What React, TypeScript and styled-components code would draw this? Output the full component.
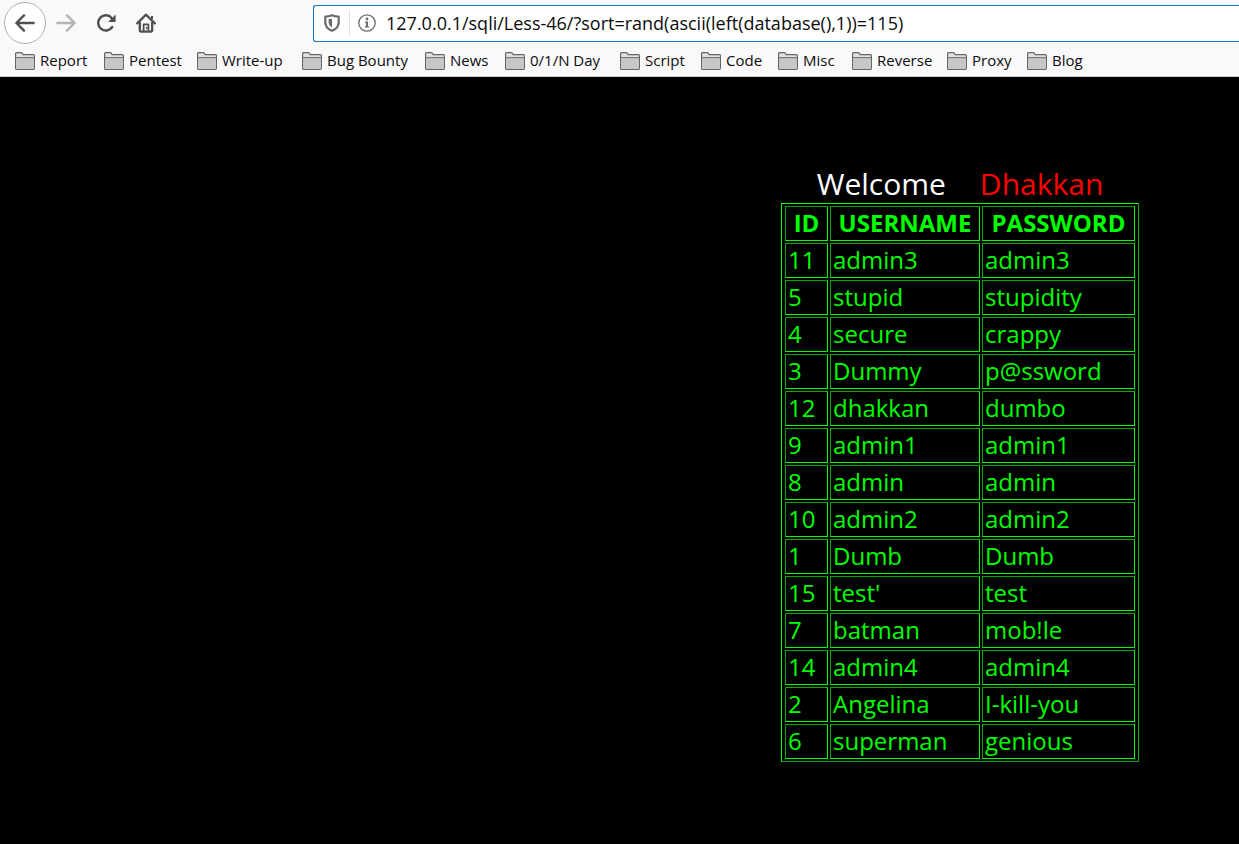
import React from "react";
import styled, { createGlobalStyle, css } from "styled-components";

const GlobalStyle = createGlobalStyle`
  html, body, #root { height: 100%; }
  body {
    margin: 0;
    background: #000;
    font-family: "Open Sans", "Noto Sans", sans-serif;
  }
`;

const Window = styled.div`
  display: flex;
  flex-direction: column;
  min-height: 100%;
  overflow-x: hidden;
`;

const Chrome = styled.header`
  background: #f9f9fa;
  border-bottom: 1px solid #cccccc;
`;

const Toolbar = styled.div`
  display: flex;
  align-items: center;
  height: 46px;
  padding-left: 4px;
`;

const NavButtons = styled.nav`
  display: flex;
  align-items: center;
  width: 309px;
  flex: none;
`;

const NavButton = styled.button<{ $round?: boolean }>`
  display: flex;
  align-items: center;
  justify-content: center;
  box-sizing: border-box;
  width: ${(p) => (p.$round ? 42 : 40)}px;
  height: ${(p) => (p.$round ? 42 : 40)}px;
  padding: 0;
  border: ${(p) => (p.$round ? "1px solid #b1b1b3" : "0")};
  border-radius: ${(p) => (p.$round ? "50%" : "2px")};
  background: ${(p) => (p.$round ? "#fff" : "transparent")};
  color: #4f4f50;

  &:disabled { color: #b4b4b5; }
`;

const AddressBar = styled.div`
  display: flex;
  align-items: center;
  flex: 1;
  box-sizing: border-box;
  height: 37px;
  border: 1px solid #0a74cc;
  border-right: 0;
  border-radius: 3px 0 0 3px;
  background: #fff;
  color: #6a6a6b;
`;

const Shield = styled.span`
  display: flex;
  align-items: center;
  justify-content: center;
  width: 35px;
  height: 26px;
  border-right: 1px solid #e1e1e2;
`;

const Info = styled.span`
  display: flex;
  margin: 0 10px 0 8px;
`;

const Url = styled.input`
  flex: 1;
  min-width: 0;
  padding: 0;
  border: 0;
  outline: 0;
  background: transparent;
  color: #0c0c0d;
  font: 18px/24px "Open Sans", "Noto Sans", sans-serif;
`;

const Bookmarks = styled.nav`
  display: flex;
  height: 30px;
  padding-left: 15px;
`;

const Bookmark = styled.a<{ $width: number }>`
  display: flex;
  align-items: center;
  gap: 5px;
  flex: none;
  width: ${(p) => p.$width}px;
  color: #0c0c0d;
  font-size: 15px;
  line-height: 20px;
  text-decoration: none;
  white-space: nowrap;
`;

const BookmarkLabel = styled.span`
  padding-bottom: 2px;
`;

const Page = styled.main`
  display: flex;
  flex: 1;
  justify-content: flex-end;
  padding: 87px 100px 80px 0;
`;

const Content = styled.section`
  width: 358px;
`;

const Greeting = styled.h1`
  display: flex;
  justify-content: center;
  gap: 34px;
  margin: 0;
  color: #fff;
  font-size: 30px;
  font-weight: 400;
  line-height: 39px;
`;

const Name = styled.span`
  color: #f00;
`;

const Table = styled.table`
  box-sizing: border-box;
  width: 100%;
  table-layout: fixed;
  border-collapse: separate;
  border-spacing: 2px;
  padding: 0 1px;
  border: 1px solid;
  border-color: #00ff00 #00a800 #00a800 #00ff00;
  color: #0f0;
  font-size: 24px;
  line-height: 31px;
`;

const cellBox = css`
  box-sizing: border-box;
  height: 35px;
  padding: 0 2px 2px;
  border: 1px solid;
  border-color: #00a800 #00ff00 #00ff00 #00a800;
  white-space: nowrap;
`;

const HeadCell = styled.th<{ $width?: number }>`
  ${cellBox}
  width: ${(p) => (p.$width ? `${p.$width}px` : "auto")};
  font-weight: 700;
  text-align: center;
`;

const Cell = styled.td`
  ${cellBox}
  text-align: left;
`;

const BackIcon = () => (
  <svg width="20" height="18" viewBox="0 0 20 18" fill="none" stroke="currentColor" strokeWidth="2.4" strokeLinecap="round" strokeLinejoin="round" aria-hidden="true">
    <path d="M18.6 9H1.6M9 1.4L1.4 9L9 16.6" />
  </svg>
);

const ForwardIcon = () => (
  <svg width="20" height="18" viewBox="0 0 20 18" fill="none" stroke="currentColor" strokeWidth="2.4" strokeLinecap="round" strokeLinejoin="round" aria-hidden="true">
    <path d="M1.4 9H18.4M11 1.4L18.6 9L11 16.6" />
  </svg>
);

const ReloadIcon = () => (
  <svg width="20" height="20" viewBox="0 0 20 20" fill="none" aria-hidden="true">
    <path d="M16.2 14A7.6 7.6 0 1 1 15.6 5" stroke="currentColor" strokeWidth="2.5" strokeLinecap="round" />
    <path d="M19.6 1.6V8.2a.8.8 0 0 1-.8.8H12.2Z" fill="currentColor" />
  </svg>
);

const HomeIcon = () => (
  <svg width="20" height="20" viewBox="0 0 20 20" fill="none" stroke="currentColor" aria-hidden="true">
    <path d="M1.2 10.4L10 1.6L18.8 10.4" strokeWidth="2.2" strokeLinecap="round" strokeLinejoin="round" />
    <path d="M3.8 9V17.6a1 1 0 0 0 1 1H15.2a1 1 0 0 0 1-1V9" strokeWidth="2.3" />
    <path d="M7.6 18V11.4H12.4V18" strokeWidth="1.8" strokeLinejoin="round" />
    <path d="M10.6 14V16" strokeWidth="1.4" />
    <path d="M16 3V6" strokeWidth="2" />
  </svg>
);

const ShieldIcon = () => (
  <svg width="16" height="18" viewBox="0 0 16 18" aria-hidden="true">
    <path d="M8 1.2C6 2.1 3.8 2.5 1.3 2.6V8C1.3 12.4 4 15.3 8 16.8C12 15.3 14.7 12.4 14.7 8V2.6C12.2 2.5 10 2.1 8 1.2Z" fill="none" stroke="currentColor" strokeWidth="2.2" strokeLinejoin="round" />
    <path d="M8 4.4C7 4.8 5.8 5 4.6 5.1V8C4.6 10.5 5.9 12.2 8 13.3Z" fill="currentColor" />
  </svg>
);

const InfoIcon = () => (
  <svg width="18" height="18" viewBox="0 0 18 18" aria-hidden="true">
    <circle cx="9" cy="9" r="8.2" fill="none" stroke="currentColor" strokeWidth="1.3" />
    <circle cx="9" cy="5" r="1.4" fill="currentColor" />
    <path d="M7 7.6H10V12.2H11V13.4H7V12.2H8V8.8H7Z" fill="currentColor" />
  </svg>
);

const FolderIcon = () => (
  <svg width="20" height="18" viewBox="0 0 20 18" aria-hidden="true">
    <path d="M.6 16.2V1.6Q.6.6 1.6.6H6.2Q7 .6 7.4 1.4L8.2 2.6H18.4Q19.4 2.6 19.4 3.6V16.2Q19.4 17.4 18.4 17.4H1.6Q.6 17.4.6 16.2Z" fill="#e2e2e3" stroke="#656567" strokeWidth="1.2" />
    <path d="M1.2 6H18.8V16.8H1.2Z" fill="#c7c7c9" />
    <path d="M1 5.6H19" stroke="#737375" strokeWidth="1.1" />
  </svg>
);

const bookmarks: [string, number][] = [
  ["Report", 89],
  ["Pentest", 93],
  ["Write-up", 105],
  ["Bug Bounty", 123],
  ["News", 80],
  ["0/1/N Day", 115],
  ["Script", 81],
  ["Code", 77],
  ["Misc", 74],
  ["Reverse", 95],
  ["Proxy", 80],
  ["Blog", 80],
];

const users = [
  ["11", "admin3", "admin3"],
  ["5", "stupid", "stupidity"],
  ["4", "secure", "crappy"],
  ["3", "Dummy", "p@ssword"],
  ["12", "dhakkan", "dumbo"],
  ["9", "admin1", "admin1"],
  ["8", "admin", "admin"],
  ["10", "admin2", "admin2"],
  ["1", "Dumb", "Dumb"],
  ["15", "test'", "test"],
  ["7", "batman", "mob!le"],
  ["14", "admin4", "admin4"],
  ["2", "Angelina", "I-kill-you"],
  ["6", "superman", "genious"],
];

export default function App() {
  return (
    <Window>
      <GlobalStyle />
      <Chrome>
        <Toolbar>
          <NavButtons aria-label="Navigation">
            <NavButton $round aria-label="Back"><BackIcon /></NavButton>
            <NavButton disabled aria-label="Forward"><ForwardIcon /></NavButton>
            <NavButton aria-label="Reload"><ReloadIcon /></NavButton>
            <NavButton aria-label="Home"><HomeIcon /></NavButton>
          </NavButtons>
          <AddressBar>
            <Shield><ShieldIcon /></Shield>
            <Info><InfoIcon /></Info>
            <Url
              aria-label="Address"
              spellCheck={false}
              defaultValue="127.0.0.1/sqli/Less-46/?sort=rand(ascii(left(database(),1))=115)"
            />
          </AddressBar>
        </Toolbar>
        <Bookmarks aria-label="Bookmarks">
          {bookmarks.map(([label, width]) => (
            <Bookmark key={label} href="#" $width={width}>
              <FolderIcon />
              <BookmarkLabel>{label}</BookmarkLabel>
            </Bookmark>
          ))}
        </Bookmarks>
      </Chrome>
      <Page>
        <Content>
          <Greeting>
            <span>Welcome</span>
            <Name>Dhakkan</Name>
          </Greeting>
          <Table>
            <thead>
              <tr>
                <HeadCell scope="col" $width={43}>ID</HeadCell>
                <HeadCell scope="col" $width={150}>USERNAME</HeadCell>
                <HeadCell scope="col">PASSWORD</HeadCell>
              </tr>
            </thead>
            <tbody>
              {users.map(([id, username, password]) => (
                <tr key={id}>
                  <Cell>{id}</Cell>
                  <Cell>{username}</Cell>
                  <Cell>{password}</Cell>
                </tr>
              ))}
            </tbody>
          </Table>
        </Content>
      </Page>
    </Window>
  );
}
